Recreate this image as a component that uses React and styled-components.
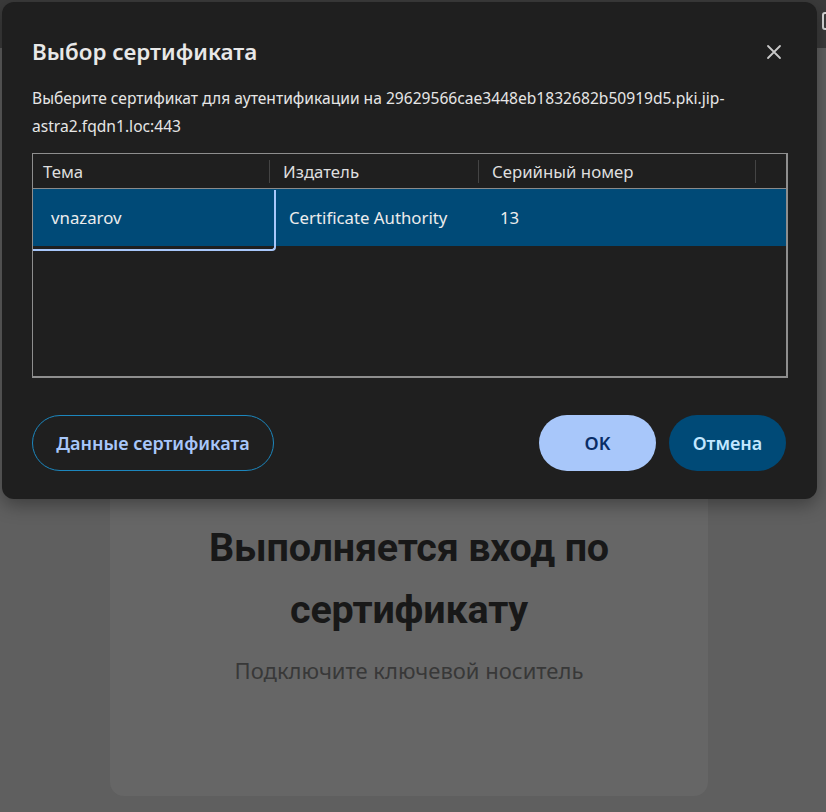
import React from "react";
import styled, { createGlobalStyle } from "styled-components";

const Global = createGlobalStyle`
  html, body { margin: 0; padding: 0; background: #5f5f5f; }
  * { box-sizing: border-box; }
`;

const Page = styled.div`
  position: relative;
  width: 826px;
  height: 812px;
  overflow: hidden;
  background: #5f5f5f;
  display: flex;
  flex-direction: column;
`;

const TopBar = styled.div`
  height: 48px;
  background: #3b3b3b;
  display: flex;
  justify-content: flex-end;
  align-items: center;
`;

const TopIcon = styled.span`
  width: 14px;
  height: 18px;
  border: 2px solid #d8d8d8;
  border-radius: 3px;
  margin-right: -10px;
  margin-top: -6px;
`;

const Card = styled.div`
  width: 598px;
  margin: 422px 0 0 110px;
  height: 326px;
  background: #666666;
  border-radius: 14px;
  padding-top: 47px;
  display: flex;
  flex-direction: column;
  align-items: center;
`;

const Heading = styled.h1`
  margin: 0;
  width: 470px;
  text-align: center;
  font-family: "Roboto", sans-serif;
  font-weight: 700;
  font-size: 39.5px;
  letter-spacing: -0.2px;
  line-height: 62px;
  color: #181818;
`;

const Sub = styled.p`
  margin: 14px 0 0;
  font-family: "Noto Sans", sans-serif;
  font-size: 22px;
  line-height: 30px;
  color: #383838;
`;

const Dialog = styled.div`
  position: absolute;
  top: 2px;
  left: 2px;
  width: 815px;
  height: 497px;
  background: #1f1f1f;
  border-radius: 12px;
  box-shadow: 0 6px 18px rgba(0, 0, 0, 0.35);
  padding: 34px 29px 0 30px;
  display: flex;
  flex-direction: column;
  font-family: "Noto Sans", sans-serif;
  color: #e3e3e3;
`;

const TitleRow = styled.div`
  display: flex;
  justify-content: space-between;
  align-items: center;
  height: 30px;
`;

const Title = styled.h2`
  margin: 0;
  font-size: 22.4px;
  font-weight: 600;
  color: #e8e8e8;
`;

const Close = styled.button`
  width: 24px;
  height: 24px;
  margin-right: 2px;
  margin-top: 2px;
  padding: 0;
  border: none;
  background: transparent;
  display: flex;
  align-items: center;
  justify-content: center;
`;

const Desc = styled.p`
  margin: 18px 0 0;
  font-size: 15.6px;
  line-height: 28px;
  color: #e6e6e6;
`;

const Table = styled.div`
  margin-top: 13px;
  height: 225px;
  border: 1px solid #8e8e8e;
  border-right-width: 2px;
  border-bottom-width: 2px;
  overflow: hidden;
  display: flex;
  flex-direction: column;
`;

const cols = "237px 209px 277px 1fr";

const HeaderRow = styled.div`
  display: grid;
  grid-template-columns: ${cols};
  height: 35px;
  border-bottom: 1px solid #8a8a8a;
`;

const HeadCell = styled.div`
  display: flex;
  align-items: center;
  padding-left: ${(p) => p.$pad}px;
  font-size: 16.8px;
  color: #dedede;
  position: relative;
  &::after {
    content: "";
    display: ${(p) => (p.$last ? "none" : "block")};
    position: absolute;
    right: 0;
    top: 6px;
    bottom: 5px;
    width: 1px;
    background: #444;
  }
`;

const Row = styled.div`
  display: grid;
  grid-template-columns: ${cols};
  height: 57px;
  background: #004a77;
`;

const Cell = styled.div`
  position: relative;
  display: flex;
  align-items: center;
  padding-left: ${(p) => p.$pad}px;
  font-size: 16.8px;
  color: #ececec;
  ${(p) =>
    p.$focus &&
    `
    &::after {
      content: "";
      position: absolute;
      left: -4px;
      top: 1px;
      right: -6px;
      bottom: -5px;
      border-right: 2px solid #a8c7fa;
      border-bottom: 2px solid #a8c7fa;
      border-bottom-right-radius: 4px;
    }
  `}
`;

const Actions = styled.div`
  margin-top: 37px;
  padding-right: 2px;
  display: flex;
  align-items: center;
  gap: 13px;
`;

const Button = styled.button`
  height: 56px;
  border-radius: 28px;
  font-family: "Noto Sans", sans-serif;
  font-size: 18px;
  font-weight: 600;
  padding: 0;
  cursor: pointer;
  width: ${(p) => p.$w}px;
  border: ${(p) => (p.$variant === "outline" ? "1.5px solid #1c86bd" : "none")};
  background: ${(p) =>
    p.$variant === "primary" ? "#a8c7fa" : p.$variant === "tonal" ? "#004a77" : "transparent"};
  color: ${(p) =>
    p.$variant === "primary" ? "#0a2d66" : p.$variant === "tonal" ? "#c2e7ff" : "#a8c7fa"};
`;

const Spacer = styled.div`
  flex: 1;
`;

export default function App() {
  return (
    <>
      <Global />
      <Page>
        <TopBar>
          <TopIcon />
        </TopBar>
        <Card>
          <Heading>Выполняется вход по сертификату</Heading>
          <Sub>Подключите ключевой носитель</Sub>
        </Card>
        <Dialog>
          <TitleRow>
            <Title>Выбор сертификата</Title>
            <Close aria-label="Закрыть">
              <svg width="16" height="16" viewBox="0 0 16 16">
                <path d="M2 2 L14 14 M14 2 L2 14" stroke="#c9c9c9" strokeWidth="1.8" strokeLinecap="round" />
              </svg>
            </Close>
          </TitleRow>
          <Desc>
            Выберите сертификат для аутентификации на 29629566cae3448eb1832682b50919d5.pki.jip-
            <br />
            astra2.fqdn1.loc:443
          </Desc>
          <Table>
            <HeaderRow>
              <HeadCell $pad={10}>Тема</HeadCell>
              <HeadCell $pad={13}>Издатель</HeadCell>
              <HeadCell $pad={13}>Серийный номер</HeadCell>
              <HeadCell $last />
            </HeaderRow>
            <Row>
              <Cell $pad={18} $focus>vnazarov</Cell>
              <Cell $pad={19}>Certificate Authority</Cell>
              <Cell $pad={21}>13</Cell>
              <Cell />
            </Row>
          </Table>
          <Actions>
            <Button $variant="outline" $w={242}>Данные сертификата</Button>
            <Spacer />
            <Button $variant="primary" $w={117}>OK</Button>
            <Button $variant="tonal" $w={117}>Отмена</Button>
          </Actions>
        </Dialog>
      </Page>
    </>
  );
}
